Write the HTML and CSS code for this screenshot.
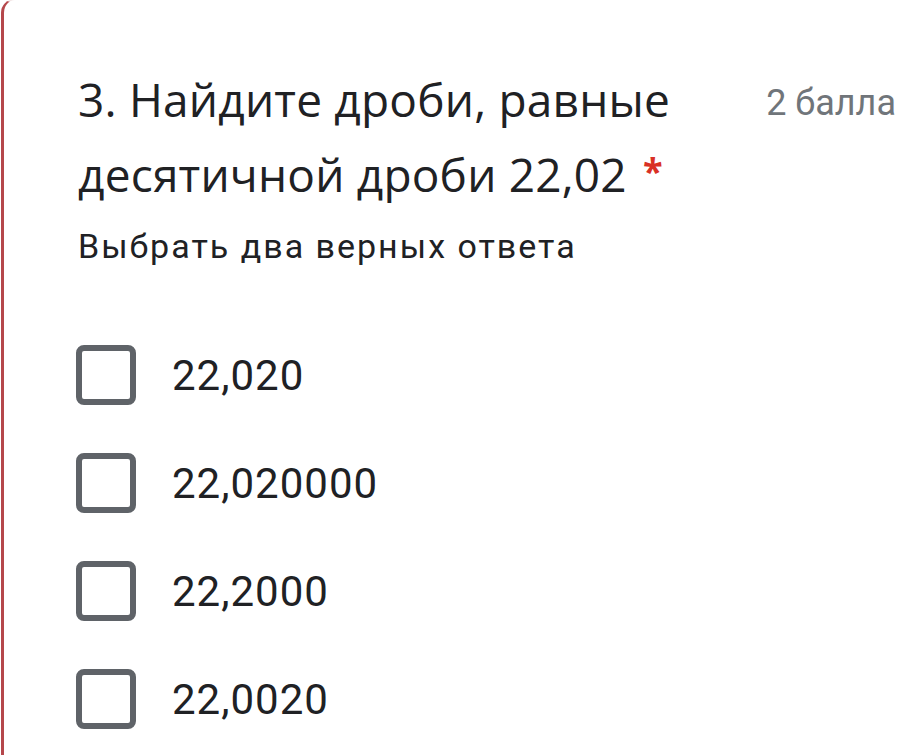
FILE: index.html
```html
<!DOCTYPE html>
<html lang="ru">
<head>
<meta charset="utf-8">
<link rel="stylesheet" href="styles.css">
</head>
<body>
<div class="card">
  <div class="header">
    <div class="title">3. Найдите дроби, равные десятичной дроби 22,02<span class="req">*</span></div>
    <div class="points">2 балла</div>
  </div>
  <div class="desc">Выбрать два верных ответа</div>
  <div class="options">
    <label class="option"><span class="box"></span><span class="opt-text">22,020</span></label>
    <label class="option"><span class="box"></span><span class="opt-text">22,020000</span></label>
    <label class="option"><span class="box"></span><span class="opt-text">22,2000</span></label>
    <label class="option"><span class="box"></span><span class="opt-text">22,0020</span></label>
  </div>
</div>
</body>
</html>
```

FILE: styles.css
```css
html, body {
  margin: 0;
  padding: 0;
  background: #ffffff;
  overflow: hidden;
}
.card {
  margin-top: -1px;
  margin-left: 1px;
  height: 756px;
  border-left: 3px solid #b5474b;
  border-top: 1px solid #f3e6e6;
  border-top-left-radius: 14px;
  padding: 63px 0 0 72px;
  box-sizing: border-box;
}
.header {
  display: flex;
  align-items: flex-start;
  justify-content: space-between;
}
.title {
  width: 640px;
  font-family: "Open Sans", sans-serif;
  font-size: 46px;
  line-height: 72px;
  color: #202124;
  letter-spacing: 0.2px;
  padding-left: 2px;
}
.req {
  color: #d93025;
  font-size: 36px;
  font-weight: 700;
  vertical-align: 8px;
  margin-left: 16px;
}
.points {
  font-family: Roboto, sans-serif;
  font-size: 36px;
  line-height: 72px;
  color: #70757a;
  padding-right: 20px;
  padding-top: 4px;
}
.desc {
  font-family: Roboto, sans-serif;
  font-size: 34px;
  letter-spacing: 2px;
  color: #202124;
  margin-top: 12px;
  line-height: 48px;
  padding-left: 2px;
}
.options {
  margin-top: 75px;
  display: flex;
  flex-direction: column;
  gap: 48px;
}
.option {
  display: flex;
  align-items: center;
  gap: 36px;
}
.box {
  width: 60px;
  height: 60px;
  box-sizing: border-box;
  border: 6px solid #5f6368;
  border-radius: 8px;
  flex: none;
}
.opt-text {
  font-family: Roboto, sans-serif;
  font-size: 42px;
  color: #202124;
  letter-spacing: 1px;
}
```
